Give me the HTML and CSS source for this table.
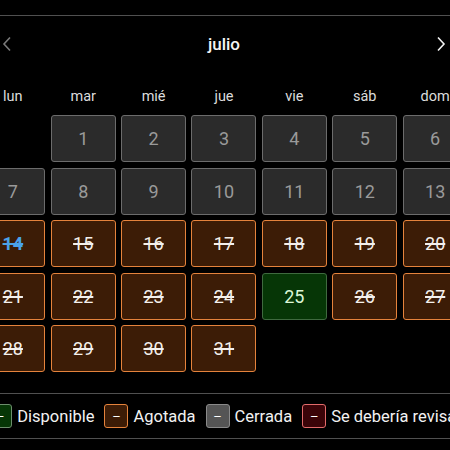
FILE: index.html
```html
<!DOCTYPE html>
<html lang="es">
<head>
<meta charset="utf-8">
<link rel="stylesheet" href="styles.css">
</head>
<body>
<div class="page">
  <div class="rule top"></div>
  <div class="header">
    <svg class="chev prev" width="10" height="16" viewBox="0 0 10 16"><polyline points="8,1.5 2,8 8,14.5" fill="none" stroke="currentColor" stroke-width="1.6"/></svg>
    <div class="month">julio</div>
    <svg class="chev next" width="10" height="16" viewBox="0 0 10 16"><polyline points="2,1.5 8,8 2,14.5" fill="none" stroke="currentColor" stroke-width="1.6"/></svg>
  </div>
  <div class="grid weekdays">
    <div>lun</div><div>mar</div><div>mié</div><div>jue</div><div>vie</div><div>sáb</div><div>dom</div>
  </div>
  <div class="grid days">
    <div class="empty"></div>
    <div class="cell closed">1</div>
    <div class="cell closed">2</div>
    <div class="cell closed">3</div>
    <div class="cell closed">4</div>
    <div class="cell closed">5</div>
    <div class="cell closed">6</div>
    <div class="cell closed">7</div>
    <div class="cell closed">8</div>
    <div class="cell closed">9</div>
    <div class="cell closed">10</div>
    <div class="cell closed">11</div>
    <div class="cell closed">12</div>
    <div class="cell closed">13</div>
    <div class="cell sold today">14</div>
    <div class="cell sold">15</div>
    <div class="cell sold">16</div>
    <div class="cell sold">17</div>
    <div class="cell sold">18</div>
    <div class="cell sold">19</div>
    <div class="cell sold">20</div>
    <div class="cell sold">21</div>
    <div class="cell sold">22</div>
    <div class="cell sold">23</div>
    <div class="cell sold">24</div>
    <div class="cell avail">25</div>
    <div class="cell sold">26</div>
    <div class="cell sold">27</div>
    <div class="cell sold">28</div>
    <div class="cell sold">29</div>
    <div class="cell sold">30</div>
    <div class="cell sold">31</div>
  </div>
  <div class="rule legend-top"></div>
  <div class="legend">
    <div class="item"><span class="box avail">–</span><span class="label">Disponible</span></div>
    <div class="item"><span class="box sold">–</span><span class="label">Agotada</span></div>
    <div class="item"><span class="box closed">–</span><span class="label">Cerrada</span></div>
    <div class="item"><span class="box review">–</span><span class="label">Se debería revisar</span></div>
  </div>
  <div class="rule"></div>
</div>
</body>
</html>
```

FILE: styles.css
```css
html, body {
  margin: 0;
  padding: 0;
  background: #000;
  width: 450px;
  height: 450px;
  overflow: hidden;
  font-family: Roboto, "Noto Sans", sans-serif;
  color: #fff;
}

.page {
  width: 450px;
  padding-top: 15px;
}

.rule {
  height: 1px;
  background: #505050;
}

.header {
  height: 56px;
  display: flex;
  align-items: center;
  justify-content: space-between;
  padding: 0 4px 0 2px;
}

.chev.prev { color: #7a7a7a; }
.chev.next { color: #f2f2f2; }

.month {
  font-size: 17px;
  font-weight: 500;
  color: #f4f4f4;
}

.grid {
  display: grid;
  grid-template-columns: repeat(7, 65px);
  column-gap: 5.4px;
  width: 487.4px;
  margin-left: -19.7px;
}

.weekdays {
  padding: 15px 0 9px;
  line-height: 19px;
  font-size: 14.5px;
  color: #dcdcdc;
  text-align: center;
}

.days {
  grid-auto-rows: 47px;
  row-gap: 5.5px;
}

.cell {
  box-sizing: border-box;
  border-radius: 3px;
  border: 1.5px solid;
  display: flex;
  align-items: center;
  justify-content: center;
  font-size: 18px;
}

.cell.closed {
  background: #2b2b2b;
  border-color: #6c6c6c;
  color: #9a9a9a;
}

.cell.sold {
  background: #3c1c06;
  border-color: #e5833c;
  color: #f4f0ec;
  text-decoration: line-through;
  text-decoration-thickness: 1.5px;
}

.cell.sold.today {
  color: #4aa2ea;
  font-weight: 700;
}

.cell.avail {
  background: #063606;
  border-color: #3f6a3f;
  color: #dcf6d6;
}

.legend-top {
  margin-top: 21px;
}

.legend {
  height: 44px;
  display: flex;
  align-items: center;
  justify-content: center;
  gap: 10px;
  white-space: nowrap;
}

.item {
  display: flex;
  align-items: center;
  gap: 5px;
  flex: none;
}

.box {
  box-sizing: border-box;
  width: 24px;
  height: 24px;
  border-radius: 3px;
  border: 1.5px solid;
  display: flex;
  align-items: center;
  justify-content: center;
  font-size: 13px;
  color: #fff;
  line-height: 1;
}

.box.avail { background: #063606; border-color: #6c8e6c; }
.box.sold { background: #3c1c06; border-color: #e5833c; }
.box.closed { background: #555; border-color: #8a8a8a; }
.box.review { background: #3a0408; border-color: #e26b6b; }

.label {
  font-size: 16.5px;
  color: #f2f2f2;
}
```
